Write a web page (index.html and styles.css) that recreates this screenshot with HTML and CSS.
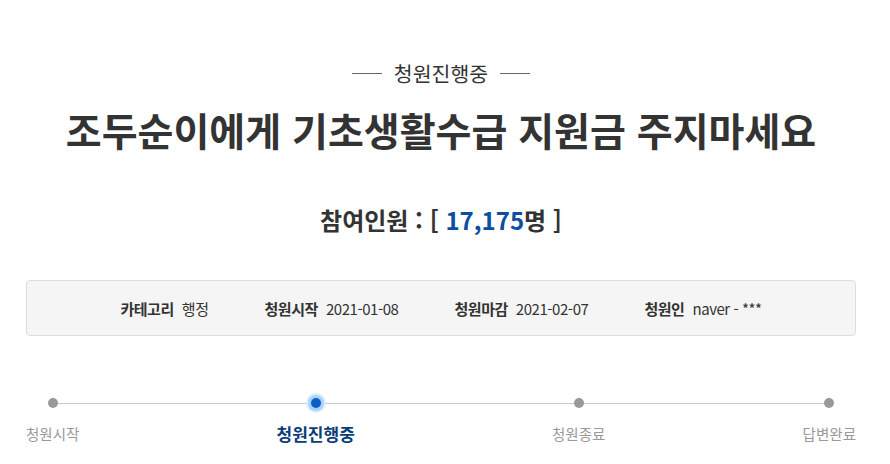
FILE: index.html
```html
<!DOCTYPE html>
<html lang="ko">
<head>
<meta charset="utf-8">
<link rel="stylesheet" href="styles.css">
</head>
<body>
<div class="wrap">
  <div class="status"><span class="dash"></span><span class="status-text">청원진행중</span><span class="dash"></span></div>
  <h1 class="title">조두순이에게 기초생활수급 지원금 주지마세요</h1>
  <div class="count">참여인원 : [ <span class="num">17,175</span>명 ]</div>
  <ul class="info">
    <li><b>카테고리</b><span>행정</span></li>
    <li><b>청원시작</b><span>2021-01-08</span></li>
    <li><b>청원마감</b><span>2021-02-07</span></li>
    <li><b>청원인</b><span>naver - ***</span></li>
  </ul>
  <div class="progress">
    <div class="track"></div>
    <div class="step"><span class="dot"></span><span class="label">청원시작</span></div>
    <div class="step active"><span class="dot"></span><span class="label">청원진행중</span></div>
    <div class="step"><span class="dot"></span><span class="label">청원종료</span></div>
    <div class="step"><span class="dot"></span><span class="label">답변완료</span></div>
  </div>
</div>
</body>
</html>
```

FILE: styles.css
```css
* { box-sizing: border-box; }
body {
  margin: 0;
  background: #fff;
  font-family: "Noto Sans CJK KR", "Noto Sans", sans-serif;
  color: #333;
}
.wrap {
  width: 830px;
  margin-left: 26px;
  padding-top: 57px;
}
.status {
  display: flex;
  justify-content: center;
  align-items: center;
  gap: 12px;
  font-size: 20.5px;
  line-height: 32px;
  color: #333;
}
.dash {
  width: 30px;
  height: 1px;
  background: #666;
}
.title {
  margin: 10px 0 0;
  text-align: center;
  font-size: 39px;
  line-height: 60px;
  font-weight: 700;
  color: #333;
}
.count {
  margin-top: 43px;
  text-align: center;
  font-size: 24px;
  line-height: 36px;
  font-weight: 700;
  color: #333;
}
.num { color: #0b4ea2; }
.info {
  list-style: none;
  margin: 42px 0 0;
  padding: 0;
  height: 56px;
  border: 1px solid #ddd;
  border-radius: 4px;
  background: #f5f5f5;
  display: flex;
  justify-content: center;
  align-items: center;
  gap: 56px;
  font-size: 15px;
  letter-spacing: -0.45px;
}
.info li { display: flex; gap: 8px; }
.info b { font-weight: 700; color: #333; }
.info span { color: #333; }
.progress {
  position: relative;
  margin-top: 58px;
  display: flex;
  justify-content: space-between;
}
.track {
  position: absolute;
  left: 27px;
  right: 28px;
  top: 9px;
  height: 1px;
  background: #ccc;
}
.step {
  position: relative;
  display: flex;
  flex-direction: column;
  align-items: center;
  gap: 15px;
}
.dot {
  width: 10px;
  height: 10px;
  margin-top: 4px;
  border-radius: 50%;
  background: #999;
}
.active .dot {
  background: #0b5fc6;
  box-shadow: 0 0 0 3px #a9d2fb, 0 0 0 5px #dcedfd;
}
.label {
  font-size: 14.5px;
  line-height: 22px;
  color: #999;
}
.active .label { color: #0b3c7a; font-weight: 700; font-size: 17px; }
```
